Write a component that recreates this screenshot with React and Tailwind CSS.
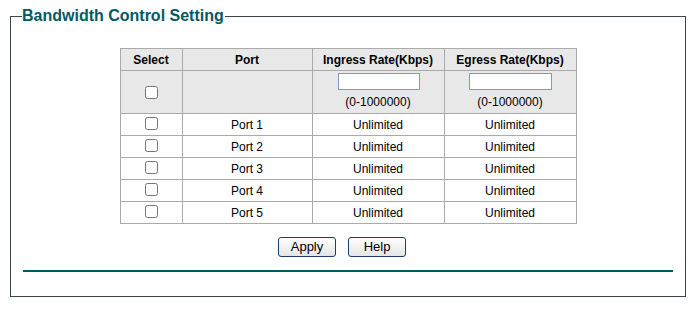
import React from "react";

const ports = ["Port 1", "Port 2", "Port 3", "Port 4", "Port 5"];

function Check() {
  return (
    <input
      type="checkbox"
      className="m-0 block w-[13px] h-[13px] mx-auto"
    />
  );
}

export default function App() {
  return (
    <div className="w-[697px] h-[317px] bg-white" style={{ fontFamily: '"Liberation Sans", Arial, sans-serif' }}>
      <fieldset className="ml-[10px] mt-[7px] w-[676px] h-[290px] border border-[#3c474d] px-[12px] m-0">
        <legend className="-ml-[1px] text-[16px] leading-[18px] font-bold text-[#005a64] p-0 pr-[1px]">
          Bandwidth Control Setting
        </legend>
        <div className="flex flex-col items-center">
          <table className="mt-[23px] border-collapse text-[12px] text-black">
            <colgroup>
              <col className="w-[62px]" />
              <col className="w-[130px]" />
              <col className="w-[132px]" />
              <col className="w-[132px]" />
            </colgroup>
            <thead>
              <tr className="h-[22px] bg-[#e8e8e8]">
                <th className="border border-[#aaaaaa] p-0 font-bold">Select</th>
                <th className="border border-[#aaaaaa] p-0 font-bold">Port</th>
                <th className="border border-[#aaaaaa] p-0 font-bold">Ingress Rate(Kbps)</th>
                <th className="border border-[#aaaaaa] p-0 font-bold">Egress Rate(Kbps)</th>
              </tr>
            </thead>
            <tbody>
              <tr className="h-[43px] bg-[#e8e8e8]">
                <td className="border border-[#aaaaaa] p-0 align-middle">
                  <Check />
                </td>
                <td className="border border-[#aaaaaa] p-0"></td>
                <td className="border border-[#aaaaaa] p-0 text-center align-top">
                  <div className="flex flex-col items-center pt-[2px]">
                    <input type="text" className="block w-[82px] h-[17px] bg-white border border-[#7f9db9] ml-[1px] outline-none" />
                    <div className="mt-[5px] leading-[14px]">(0-1000000)</div>
                  </div>
                </td>
                <td className="border border-[#aaaaaa] p-0 text-center align-top">
                  <div className="flex flex-col items-center pt-[2px]">
                    <input type="text" className="block w-[83px] h-[17px] bg-white border border-[#7f9db9] ml-[1px] outline-none" />
                    <div className="mt-[5px] leading-[14px]">(0-1000000)</div>
                  </div>
                </td>
              </tr>
              {ports.map((p) => (
                <tr key={p} className="h-[22px] bg-white">
                  <td className="border border-[#aaaaaa] p-0 align-middle">
                    <div className="-mt-[3px]">
                      <Check />
                    </div>
                  </td>
                  <td className="border border-[#aaaaaa] p-0 text-center">{p}</td>
                  <td className="border border-[#aaaaaa] p-0 text-center">Unlimited</td>
                  <td className="border border-[#aaaaaa] p-0 text-center">Unlimited</td>
                </tr>
              ))}
            </tbody>
          </table>
          <div className="flex gap-[12px] mt-[13px] mr-[12px]">
            <button className="w-[58px] h-[20px] rounded-[3px] border border-[#1d3d6b] bg-gradient-to-b from-white to-[#e4e4e4] text-[13px] leading-[18px] text-black">
              Apply
            </button>
            <button className="w-[58px] h-[20px] rounded-[3px] border border-[#1d3d6b] bg-gradient-to-b from-white to-[#e4e4e4] text-[13px] leading-[18px] text-black">
              Help
            </button>
          </div>
        </div>
        <div className="mt-[13px] h-[2px] bg-[#005a64]" />
      </fieldset>
    </div>
  );
}
